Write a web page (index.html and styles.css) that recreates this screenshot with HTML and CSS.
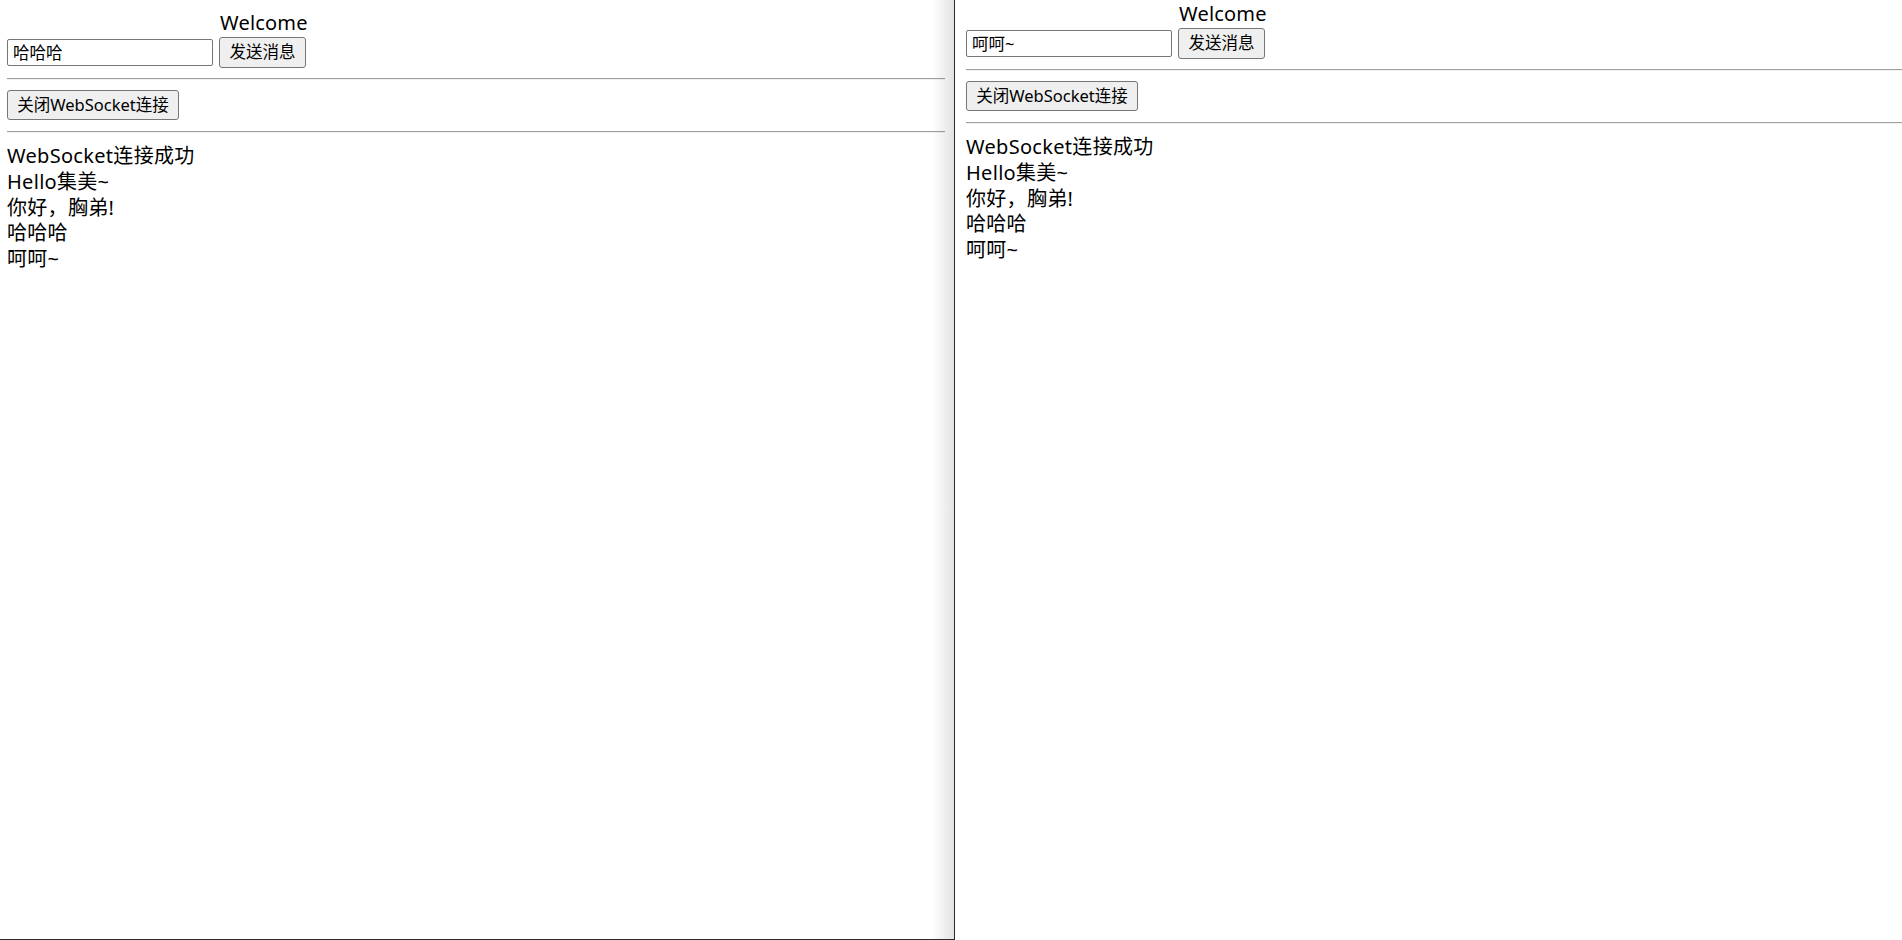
FILE: index.html
```html
<!DOCTYPE html>
<html lang="zh-CN">
<head>
<meta charset="utf-8">
<title>WebSocket</title>
<link rel="stylesheet" href="styles.css">
</head>
<body>
<div class="desk">
  <section class="win win-left">
    <div class="welcome">Welcome</div>
    <div class="row">
      <input class="text-input" type="text" value="哈哈哈">
      <button class="btn btn-send">发送消息</button>
    </div>
    <hr class="rule">
    <div class="row row-close">
      <button class="btn btn-close">关闭WebSocket连接</button>
    </div>
    <hr class="rule">
    <div class="messages">
      <div>WebSocket连接成功</div>
      <div>Hello集美~</div>
      <div>你好，胸弟!</div>
      <div>哈哈哈</div>
      <div>呵呵~</div>
    </div>
    <div class="shadow"></div>
  </section>
  <section class="win win-right">
    <div class="welcome">Welcome</div>
    <div class="row">
      <input class="text-input" type="text" value="呵呵~">
      <button class="btn btn-send">发送消息</button>
    </div>
    <hr class="rule">
    <div class="row row-close">
      <button class="btn btn-close">关闭WebSocket连接</button>
    </div>
    <hr class="rule">
    <div class="messages">
      <div>WebSocket连接成功</div>
      <div>Hello集美~</div>
      <div>你好，胸弟!</div>
      <div>哈哈哈</div>
      <div>呵呵~</div>
    </div>
  </section>
</div>
</body>
</html>
```

FILE: styles.css
```css
html, body {
  margin: 0;
  padding: 0;
  background: #ffffff;
}

body {
  font-family: "Noto Sans", "Noto Sans CJK SC", sans-serif;
  font-size: 20px;
  color: #000000;
}

.desk {
  display: flex;
  width: 1902px;
  height: 940px;
  overflow: hidden;
}

.win {
  box-sizing: border-box;
  position: relative;
  height: 940px;
}

.win-left {
  width: 955px;
  padding: 10px 9px 0 7px;
  border-right: 1px solid #2b2b2b;
  border-bottom: 1px solid #2b2b2b;
}

.win-right {
  flex: 1;
  padding: 1px 0 0 11px;
}

.shadow {
  position: absolute;
  top: 0;
  right: 0;
  bottom: 0;
  width: 22px;
  background: linear-gradient(to right, rgba(0, 0, 0, 0), rgba(0, 0, 0, 0.11));
  pointer-events: none;
}

.welcome {
  height: 26px;
  line-height: 26px;
  padding-left: 213px;
  letter-spacing: 0.2px;
}

.row {
  display: flex;
  align-items: center;
  gap: 6px;
  height: 32px;
}

.row-close {
  align-items: flex-start;
  height: 31px;
}

.text-input {
  box-sizing: border-box;
  width: 206px;
  height: 27px;
  margin: 0;
  padding: 0 5px;
  border: 1px solid #767676;
  border-radius: 2px;
  font-family: "Noto Sans", "Noto Sans CJK SC", sans-serif;
  font-size: 16.5px;
  color: #000000;
  background: #ffffff;
  outline: none;
}

.btn {
  box-sizing: border-box;
  margin: 0;
  padding: 0;
  border: 1px solid #767676;
  border-radius: 3px;
  background: #efefef;
  font-family: "Noto Sans", "Noto Sans CJK SC", sans-serif;
  font-size: 16.5px;
  color: #000000;
  line-height: 1;
  white-space: nowrap;
}

.btn-send {
  width: 87px;
  height: 31px;
}

.btn-close {
  width: 172px;
  height: 30px;
}

.rule {
  height: 0;
  margin: 10px 0;
  border: none;
  border-top: 1px solid #a0a0a0;
  border-bottom: 1px solid #f0f0f0;
}

.messages {
  line-height: 25.8px;
  letter-spacing: 0.3px;
}
```
